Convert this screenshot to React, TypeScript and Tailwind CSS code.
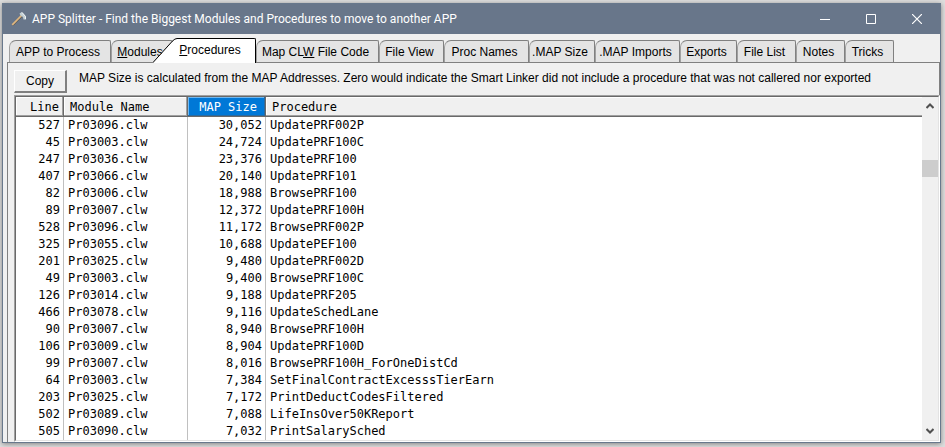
import type { ReactNode } from "react";

type Tab = { label: ReactNode; width: string };

const tabsBefore: Tab[] = [
  { label: "APP to Process", width: "w-[102px]" },
  { label: <><u>M</u>odules</>, width: "w-[62px]" },
];

const tabsAfter: Tab[] = [
  { label: <>Map CL<u>W</u> File Code</>, width: "w-[123px]" },
  { label: "File View", width: "w-[65px]" },
  { label: "Proc Names", width: "w-[85px]" },
  { label: ".MAP Size", width: "w-[66px]" },
  { label: ".MAP Imports", width: "w-[85px]" },
  { label: "Exports", width: "w-[57px]" },
  { label: "File List", width: "w-[59px]" },
  { label: "Notes", width: "w-[49px]" },
  { label: "Tricks", width: "w-[49px]" },
];

const rows: [number, string, string, string][] = [
  [527, "Pr03096.clw", "30,052", "UpdatePRF002P"],
  [45, "Pr03003.clw", "24,724", "UpdatePRF100C"],
  [247, "Pr03036.clw", "23,376", "UpdatePRF100"],
  [407, "Pr03066.clw", "20,140", "UpdatePRF101"],
  [82, "Pr03006.clw", "18,988", "BrowsePRF100"],
  [89, "Pr03007.clw", "12,372", "UpdatePRF100H"],
  [528, "Pr03096.clw", "11,172", "BrowsePRF002P"],
  [325, "Pr03055.clw", "10,688", "UpdatePEF100"],
  [201, "Pr03025.clw", "9,480", "UpdatePRF002D"],
  [49, "Pr03003.clw", "9,400", "BrowsePRF100C"],
  [126, "Pr03014.clw", "9,188", "UpdatePRF205"],
  [466, "Pr03078.clw", "9,116", "UpdateSchedLane"],
  [90, "Pr03007.clw", "8,940", "BrowsePRF100H"],
  [106, "Pr03009.clw", "8,904", "UpdatePRF100D"],
  [99, "Pr03007.clw", "8,016", "BrowsePRF100H_ForOneDistCd"],
  [64, "Pr03003.clw", "7,384", "SetFinalContractExcesssTierEarn"],
  [203, "Pr03025.clw", "7,172", "PrintDeductCodesFiltered"],
  [502, "Pr03089.clw", "7,088", "LifeInsOver50KReport"],
  [505, "Pr03090.clw", "7,032", "PrintSalarySched"],
];

const headCell =
  "border-r border-b border-[#696969] pt-px font-normal shadow-[inset_-1px_-1px_#a0a0a0,inset_1px_1px_#ffffff]";

function TabButton({ tab }: { tab: Tab }) {
  return (
    <button
      type="button"
      role="tab"
      aria-selected={false}
      className={`${tab.width} h-[22px] shrink-0 rounded-tl-[7px] rounded-tr-xs border border-b-0 border-l-[#a0a0a0] border-t-[#808080] border-r-[#808080] bg-[#e4e4e4] pr-1 text-center`}
    >
      {tab.label}
    </button>
  );
}

function SelectedTab() {
  return (
    <button
      type="button"
      role="tab"
      aria-selected={true}
      className="z-10 -mb-px -ml-[20px] flex h-[25px] w-[103px] shrink-0"
    >
      <svg width="24" height="25" viewBox="0 0 24 25" className="shrink-0" aria-hidden="true">
        <path d="M0 25 20 3 24 1V25Z" fill="#fff" />
        <path d="M0 24.5 19.5 3Q22 .5 24 .5" fill="none" stroke="#000" />
      </svg>
      <span className="h-full grow rounded-tr-xs border-t border-r border-black bg-white pt-[3px] pr-3 text-center">
        <u>P</u>rocedures
      </span>
    </button>
  );
}

function HammerIcon() {
  return (
    <svg width="16" height="16" viewBox="0 0 16 16" className="shrink-0" aria-hidden="true">
      <path d="M2 14.5 11 5.5" stroke="#5a5040" strokeWidth="1" />
      <path d="M1.2 13.8 10.5 4.5" stroke="#e0b67e" strokeWidth="1.7" />
      <path d="M8.5 2.5 11 1 15 5.5 15 8.5 12.5 8.5 12 6 9.5 4.5Z" fill="#c4d0d4" />
      <path d="M11 1.5 14.5 5.5V8" fill="none" stroke="#eef2f4" />
    </svg>
  );
}

function Chevron({ down = false }: { down?: boolean }) {
  return (
    <svg width="8" height="6" viewBox="0 0 8 6" className={down ? "rotate-180" : ""} aria-hidden="true">
      <path d="M.5 5 4 1.5 7.5 5" fill="none" stroke="#505050" strokeWidth="2" />
    </svg>
  );
}

export default function App() {
  return (
    <div className="min-h-screen bg-[#dedede] pt-[3px] pr-1 pb-1 pl-[2px] font-['Liberation_Sans',Arial,sans-serif] text-xs leading-4 text-black">
      <div className="border border-[#68788c] bg-[#f0f0f0] shadow-[0_1px_5px_#808080]">
        <header className="flex h-[30px] items-center bg-[#68768a] pl-2 text-white">
          <HammerIcon />
          <h1 className="grow pl-[5px] font-['Roboto','Noto_Sans',sans-serif] text-xs">
            APP Splitter - Find the Biggest Modules and Procedures to move to another APP
          </h1>
          <button type="button" aria-label="Minimize" className="flex h-full w-[46px] items-center justify-center">
            <svg width="10" height="10" viewBox="0 0 10 10"><path d="M0 5.5H10" stroke="#fff" /></svg>
          </button>
          <button type="button" aria-label="Maximize" className="flex h-full w-[46px] items-center justify-center">
            <svg width="10" height="10" viewBox="0 0 10 10"><path d="M.5.5H9.5V9.5H.5Z" fill="none" stroke="#fff" /></svg>
          </button>
          <button type="button" aria-label="Close" className="flex h-full w-[46px] items-center justify-center">
            <svg width="10" height="10" viewBox="0 0 10 10"><path d="M0 0 10 10M10 0 0 10" stroke="#fff" strokeWidth="1.2" /></svg>
          </button>
        </header>

        <div role="tablist" className="flex h-[28px] items-end pl-[6px]">
          {tabsBefore.map((tab, i) => <TabButton key={i} tab={tab} />)}
          <SelectedTab />
          {tabsAfter.map((tab, i) => <TabButton key={i} tab={tab} />)}
        </div>

        <main className="ml-1 border-t border-l border-[#808080]">
          <div className="flex h-8 gap-3 border-r border-[#808080] pl-[6px]">
            <button
              type="button"
              className="mt-[7px] h-[23px] w-[53px] border-t border-r-2 border-b-2 border-l border-t-white border-r-[#808080] border-b-[#808080] border-l-white bg-[#f0f0f0]"
            >
              Copy
            </button>
            <p className="pt-[7px]">
              MAP Size is calculated from the MAP Addresses. Zero would indicate the Smart Linker did not include a procedure that was not callered nor exported
            </p>
          </div>

          <div className="ml-[6px] border-t border-r border-b border-l border-t-[#a0a0a0] border-r-white border-b-white border-l-[#a0a0a0]">
            <div className="flex border border-t-[#696969] border-r-[#e3e3e3] border-b-[#e3e3e3] border-l-[#696969] bg-white">
              <table className="grow table-fixed border-separate border-spacing-0 font-['DejaVu_Sans_Mono','Liberation_Mono',monospace] text-xs leading-[17px]">
                <colgroup>
                  <col className="w-[48px]" />
                  <col className="w-[124px]" />
                  <col className="w-[78px]" />
                  <col />
                </colgroup>
                <thead>
                  <tr className="h-5 bg-[#f0f0f0] text-left">
                    <th className={`${headCell} pr-1 text-right`}>Line</th>
                    <th className={`${headCell} pl-[6px]`}>Module Name</th>
                    <th aria-sort="descending" className="border-r border-b border-[#696969] bg-[#0078d7] pt-px pr-2 text-right font-normal text-white shadow-[inset_-1px_-1px_#2a6aa0,inset_1px_1px_#70b8f0]">MAP Size</th>
                    <th className="border-b border-[#696969] pt-px pl-[6px] font-normal shadow-[inset_0_-1px_#a0a0a0,inset_1px_1px_#ffffff]">Procedure</th>
                  </tr>
                </thead>
                <tbody>
                  {rows.map(([line, module, size, procedure]) => (
                    <tr key={line} className="h-[17px]">
                      <td className="border-r border-[#c0c0c0] pr-[3px] text-right">{line}</td>
                      <td className="border-r border-[#c0c0c0] pl-1">{module}</td>
                      <td className="border-r border-[#c0c0c0] pr-[3px] text-right">{size}</td>
                      <td className="pl-1">{procedure}</td>
                    </tr>
                  ))}
                </tbody>
              </table>
              <div className="flex w-4 shrink-0 flex-col items-center justify-between bg-[#f0f0f0] py-[6px]">
                <Chevron />
                <div className="mb-[200px] h-[17px] w-full bg-[#cdcdcd]" />
                <Chevron down />
              </div>
            </div>
          </div>
        </main>
      </div>
    </div>
  );
}
